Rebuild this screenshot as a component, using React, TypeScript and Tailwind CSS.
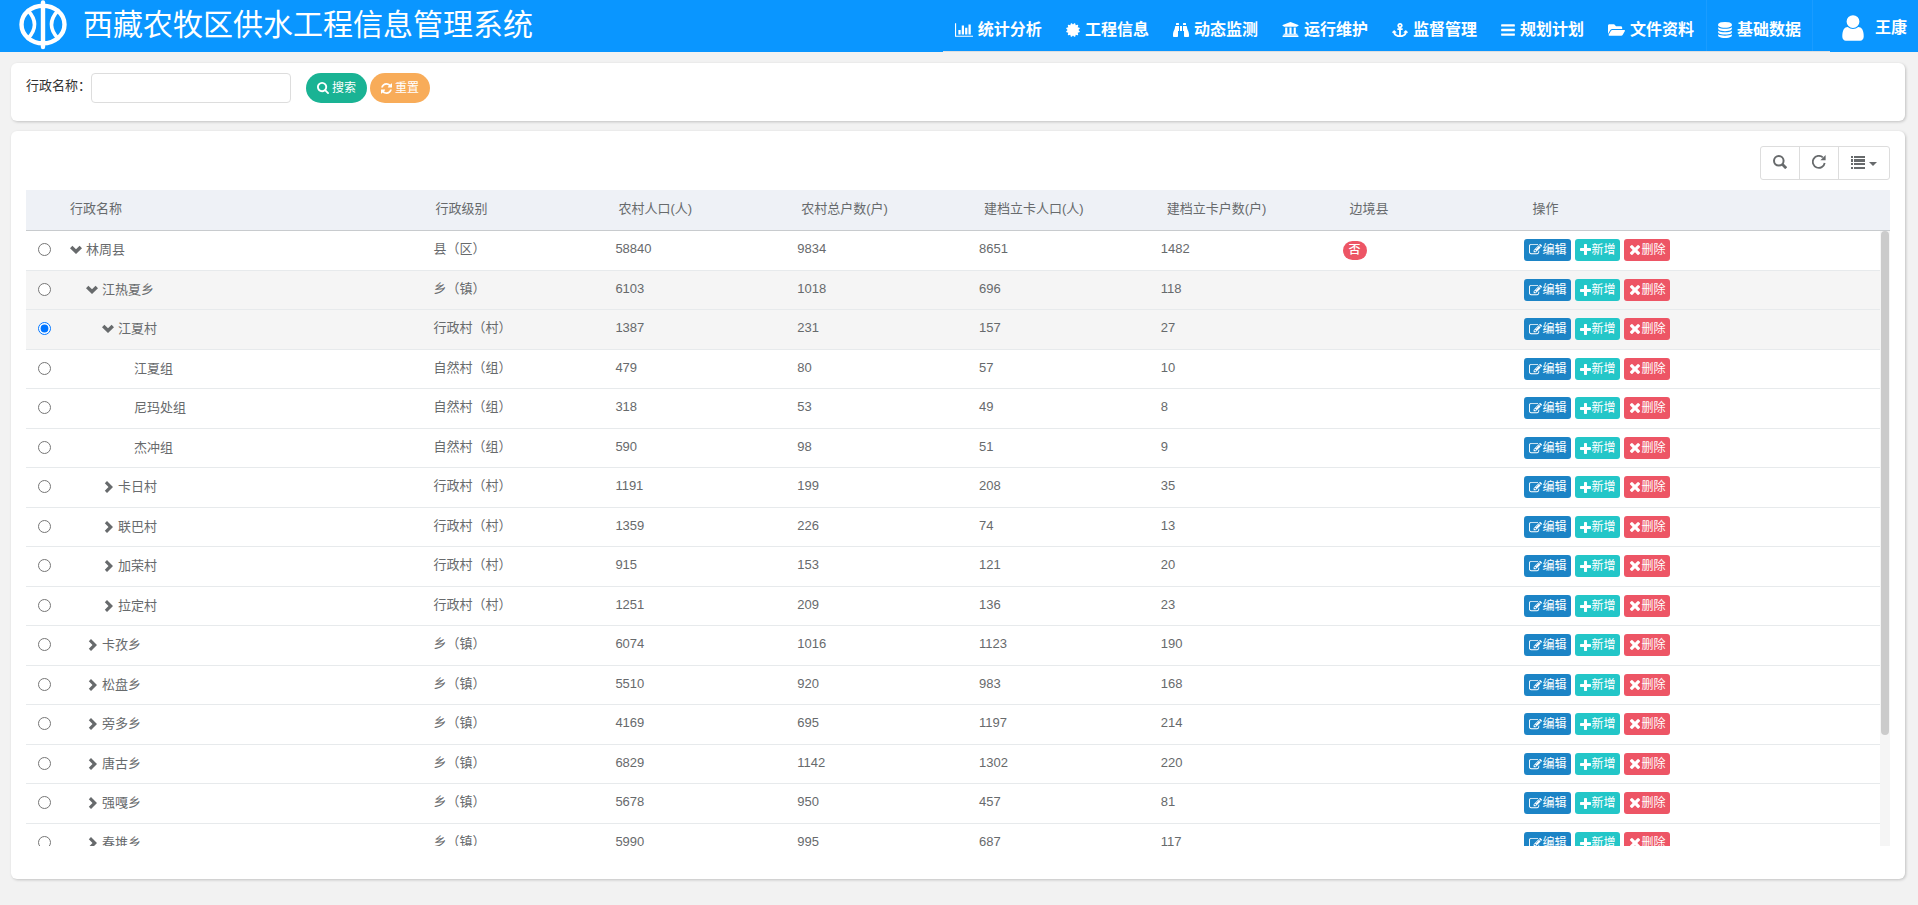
import { useState } from "react";
import type { ReactNode } from "react";
import { FaAnchor, FaBinoculars, FaFolderOpen, FaUniversity } from "react-icons/fa";
import clsx from "clsx";

interface IconProps {
  d: string;
  viewBox?: string;
  className?: string;
}

function Icon({ d, viewBox = "0 0 1792 1792", className }: IconProps) {
  return (
    <svg viewBox={viewBox} className={className} fill="currentColor" aria-hidden="true">
      <path d={d} />
    </svg>
  );
}

const ICONS = {
  barChart:
    "M640 896v512h-256v-512h256zm384-512v1024h-256v-1024h256zm1024 1152v128h-2048v-1536h128v1408h1920zm-640-896v768h-256v-768h256zm384-384v1152h-256v-1152h256z",
  certificate:
    "M1504 896l138 135q30 28 20 70-12 41-52 51l-188 48 53 186q12 41-19 70-29 31-70 19l-186-53-48 188q-10 40-51 52-12 2-19 2-31 0-51-22l-135-138-135 138q-28 30-70 20-41-11-51-52l-48-188-186 53q-41 12-70-19-31-29-19-70l53-186-188-48q-40-10-52-51-10-42 20-70l138-135-138-135q-30-28-20-70 12-41 52-51l188-48-53-186q-12-41 19-70 29-31 70-19l186 53 48-188q10-41 51-51 41-12 70 19l135 139 135-139q29-30 70-19 41 10 51 51l48 188 186-53q41-12 70 19 31 29 19 70l-53 186 188 48q40 10 52 51 10 42-20 70z",
  bars: "M1664 1344v128q0 26-19 45t-45 19h-1408q-26 0-45-19t-19-45v-128q0-26 19-45t45-19h1408q26 0 45 19t19 45zm0-512v128q0 26-19 45t-45 19h-1408q-26 0-45-19t-19-45v-128q0-26 19-45t45-19h1408q26 0 45 19t19 45zm0-512v128q0 26-19 45t-45 19h-1408q-26 0-45-19t-19-45v-128q0-26 19-45t45-19h1408q26 0 45 19t19 45z",
  database:
    "M896 768q237 0 443-43t325-127v170q0 69-103 128t-280 93.5-385 34.5-385-34.5-280-93.5-103-128v-170q119 84 325 127t443 43zm0 768q237 0 443-43t325-127v170q0 69-103 128t-280 93.5-385 34.5-385-34.5-280-93.5-103-128v-170q119 84 325 127t443 43zm0-384q237 0 443-43t325-127v170q0 69-103 128t-280 93.5-385 34.5-385-34.5-280-93.5-103-128v-170q119 84 325 127t443 43zm0-1152q208 0 385 34.5t280 93.5 103 128v128q0 69-103 128t-280 93.5-385 34.5-385-34.5-280-93.5-103-128v-128q0-69 103-128t280-93.5 385-34.5z",
  user: "M1536 1399q0 109-62.5 187t-150.5 78h-854q-88 0-150.5-78t-62.5-187q0-85 8.5-160.5t31.5-152 58.5-131 94-89 134.5-34.5q131 128 313 128t313-128q76 0 134.5 34.5t94 89 58.5 131 31.5 152 8.5 160.5zm-256-887q0 159-112.5 271.5t-271.5 112.5-271.5-112.5-112.5-271.5 112.5-271.5 271.5-112.5 271.5 112.5 112.5 271.5z",
  search:
    "M1216 832q0-185-131.5-316.5t-316.5-131.5-316.5 131.5-131.5 316.5 131.5 316.5 316.5 131.5 316.5-131.5 131.5-316.5zm512 832q0 52-38 90t-90 38q-54 0-90-38l-343-342q-179 124-399 124-143 0-273.5-55.5t-225-150-150-225-55.5-273.5 55.5-273.5 150-225 225-150 273.5-55.5 273.5 55.5 225 150 150 225 55.5 273.5q0 220-124 399l343 343q37 37 37 90z",
  refresh:
    "M1639 1056q0 5-1 7-64 268-268 434.5t-478 166.5q-146 0-282.5-55t-243.5-157l-129 129q-19 19-45 19t-45-19-19-45v-448q0-26 19-45t45-19h448q26 0 45 19t19 45-19 45l-137 137q71 66 161 102t187 36q134 0 250-65t186-179q11-17 53-117 8-23 30-23h192q13 0 22.5 9.5t9.5 22.5zm25-800v448q0 26-19 45t-45 19h-448q-26 0-45-19t-19-45 19-45l138-138q-148-137-349-137-134 0-250 65t-186 179q-11 17-53 117-8 23-30 23h-199q-13 0-22.5-9.5t-9.5-22.5v-7q65-268 270-434.5t480-166.5q146 0 284 55.5t245 156.5l130-129q19-19 45-19t45 19 19 45z",
  edit: "M888 1184l116-116-152-152-116 116v56h96v96h56zm440-720q-16-16-33 1l-350 350q-17 17-1 33t33-1l350-350q17-17 1-33zm80 594v190q0 119-84.5 203.5t-203.5 84.5h-832q-119 0-203.5-84.5t-84.5-203.5v-832q0-119 84.5-203.5t203.5-84.5h832q63 0 117 25 15 7 18 23 3 17-9 29l-49 49q-14 14-32 8-23-6-45-6h-832q-66 0-113 47t-47 113v832q0 66 47 113t113 47h832q66 0 113-47t47-113v-126q0-13 9-22l64-64q15-15 35-7t20 29zm-96-738l288 288-672 672h-288v-288zm444 132l-92 92-288-288 92-92q28-28 68-28t68 28l152 152q28 28 28 68t-28 68z",
  plus: "M1600 736v192q0 40-28 68t-68 28h-416v416q0 40-28 68t-68 28h-192q-40 0-68-28t-28-68v-416h-416q-40 0-68-28t-28-68v-192q0-40 28-68t68-28h416v-416q0-40 28-68t68-28h192q40 0 68 28t28 68v416h416q40 0 68 28t28 68z",
  remove:
    "M1490 1322q0 40-28 68l-136 136q-28 28-68 28t-68-28l-294-294-294 294q-28 28-68 28t-68-28l-136-136q-28-28-28-68t28-68l294-294-294-294q-28-28-28-68t28-68l136-136q28-28 68-28t68 28l294 294 294-294q28-28 68-28t68 28l136 136q28 28 28 68t-28 68l-294 294 294 294q28 28 28 68z",
  chevronDown: "M0 4.3L2.400 1.800 6 5.200 9.600 1.800 12 4.300 6 10z",
  chevronRight: "M5 0L11 6 5 12 2.800 9.800 6.500 6 2.800 2.200z",
};

interface NavItem {
  label: string;
  icon: ReactNode;
  active?: boolean;
}

const NAV: NavItem[] = [
  { label: "统计分析", icon: <Icon d={ICONS.barChart} viewBox="0 0 2048 1792" className="h-4 w-[18px]" /> },
  { label: "工程信息", icon: <Icon d={ICONS.certificate} viewBox="128 0 1536 1792" className="h-4 w-[14px]" /> },
  { label: "动态监测", icon: <FaBinoculars className="h-4 w-4" /> },
  { label: "运行维护", icon: <FaUniversity className="h-[17px] w-[17px]" /> },
  { label: "监督管理", icon: <FaAnchor className="h-4 w-4" /> },
  { label: "规划计划", icon: <Icon d={ICONS.bars} viewBox="128 0 1536 1792" className="h-4 w-[14px]" /> },
  { label: "文件资料", icon: <FaFolderOpen className="h-4 w-[17px]" /> },
  { label: "基础数据", icon: <Icon d={ICONS.database} viewBox="128 0 1536 1792" className="h-4 w-[14px]" />, active: true },
];

const COLUMNS = [
  "行政名称",
  "行政级别",
  "农村人口(人)",
  "农村总户数(户)",
  "建档立卡人口(人)",
  "建档立卡户数(户)",
  "边境县",
  "操作",
];

interface Region {
  name: string;
  level: number;
  type: string;
  values: number[];
  open?: boolean;
  leaf?: boolean;
  border?: string;
}

const COUNTY = "县（区）";
const TOWN = "乡（镇）";
const VILLAGE = "行政村（村）";
const GROUP = "自然村（组）";

const REGIONS: Region[] = [
  { name: "林周县", level: 0, type: COUNTY, values: [58840, 9834, 8651, 1482], open: true, border: "否" },
  { name: "江热夏乡", level: 1, type: TOWN, values: [6103, 1018, 696, 118], open: true },
  { name: "江夏村", level: 2, type: VILLAGE, values: [1387, 231, 157, 27], open: true },
  { name: "江夏组", level: 3, type: GROUP, values: [479, 80, 57, 10], leaf: true },
  { name: "尼玛处组", level: 3, type: GROUP, values: [318, 53, 49, 8], leaf: true },
  { name: "杰冲组", level: 3, type: GROUP, values: [590, 98, 51, 9], leaf: true },
  { name: "卡日村", level: 2, type: VILLAGE, values: [1191, 199, 208, 35] },
  { name: "联巴村", level: 2, type: VILLAGE, values: [1359, 226, 74, 13] },
  { name: "加荣村", level: 2, type: VILLAGE, values: [915, 153, 121, 20] },
  { name: "拉定村", level: 2, type: VILLAGE, values: [1251, 209, 136, 23] },
  { name: "卡孜乡", level: 1, type: TOWN, values: [6074, 1016, 1123, 190] },
  { name: "松盘乡", level: 1, type: TOWN, values: [5510, 920, 983, 168] },
  { name: "旁多乡", level: 1, type: TOWN, values: [4169, 695, 1197, 214] },
  { name: "唐古乡", level: 1, type: TOWN, values: [6829, 1142, 1302, 220] },
  { name: "强嘎乡", level: 1, type: TOWN, values: [5678, 950, 457, 81] },
  { name: "春堆乡", level: 1, type: TOWN, values: [5990, 995, 687, 117] },
];

const INDENT = ["pl-2", "pl-6", "pl-10", "pl-14"];

function Logo() {
  return (
    <svg viewBox="0 0 48 50" className="h-[50px] w-12 shrink-0" fill="none" stroke="#fff" strokeLinecap="round">
      <ellipse cx="24" cy="24.500" rx="21.500" ry="18.800" strokeWidth="4.400" />
      <path d="M24 2.500V47" strokeWidth="4.400" />
      <path d="M9 10.500Q22 24.500 9 38.500" strokeWidth="3.600" />
      <path d="M39 10.500Q26 24.500 39 38.500" strokeWidth="3.600" />
    </svg>
  );
}

function Header() {
  return (
    <header className="flex h-[52px] items-stretch bg-[#0a96ff] text-white">
      <div className="flex flex-1 items-start pl-[19px]">
        <Logo />
        <h1 className="pl-4 text-[30px] leading-[50px] whitespace-nowrap">西藏农牧区供水工程信息管理系统</h1>
      </div>
      <nav className="flex items-stretch border-b border-[#dddfe1] pr-[17px]">
        {NAV.map((item) => (
          <a
            key={item.label}
            href="#"
            className={clsx(
              "flex items-center gap-[5px] border-x px-[11px] pt-2 text-base font-bold whitespace-nowrap",
              item.active ? "border-[#1a9cff]" : "border-transparent"
            )}
          >
            {item.icon}
            <span>{item.label}</span>
          </a>
        ))}
      </nav>
      <a href="#" className="flex items-center gap-[11px] pt-1 pr-[11px] pl-3 text-base font-bold">
        <Icon d={ICONS.user} viewBox="256 0 1280 1792" className="h-[30px] w-[22px]" />
        <span>王康</span>
      </a>
    </header>
  );
}

function SearchPanel() {
  const [keyword, setKeyword] = useState("");

  return (
    <form
      className="flex items-start rounded-md bg-white px-[15px] pt-[10px] pb-[18px] shadow-[1px_1px_3px_rgba(0,0,0,0.2)]"
      onSubmit={(e) => e.preventDefault()}
    >
      <label htmlFor="region-name" className="w-[65px] text-[13px] leading-[26px] whitespace-nowrap text-[#333]">
        行政名称：
      </label>
      <input
        id="region-name"
        type="text"
        value={keyword}
        onChange={(e) => setKeyword(e.target.value)}
        className="h-[30px] w-[200px] rounded border border-[#ddd] px-2 text-[13px] outline-none"
      />
      <button
        type="submit"
        className="ml-[15px] flex h-[30px] items-center gap-[3px] rounded-full bg-[#1ab394] px-[11px] text-xs text-white"
      >
        <Icon d={ICONS.search} viewBox="64 128 1664 1664" className="h-3 w-3" />
        搜索
      </button>
      <button
        type="button"
        onClick={() => setKeyword("")}
        className="ml-[3px] flex h-[30px] items-center gap-[3px] rounded-full bg-[#f8ac59] px-[11px] text-xs text-white"
      >
        <Icon d={ICONS.refresh} viewBox="128 128 1536 1536" className="h-[11px] w-[11px]" />
        重置
      </button>
    </form>
  );
}

function Toolbar() {
  return (
    <div className="flex justify-end">
      <div className="flex h-[34px] divide-x divide-[#ddd] rounded-[3px] border border-[#ddd] text-[#676a6c]">
        <button type="button" aria-label="搜索" className="flex w-[39px] items-start justify-center pt-2">
          <svg viewBox="0 0 14 14" className="h-3.5 w-3.5" fill="none" stroke="currentColor">
            <circle cx="5.800" cy="5.800" r="4.800" strokeWidth="2" />
            <path d="M9.300 9.300L13.200 13.200" strokeWidth="2.800" />
          </svg>
        </button>
        <button type="button" aria-label="刷新" className="flex w-[39px] items-start justify-center pt-2">
          <svg viewBox="0 0 14 14" className="h-3.5 w-3.5" fill="none" stroke="currentColor">
            <path d="M12.700 8A6 6 0 1 1 10.800 2.400" strokeWidth="1.800" />
            <path d="M13.600 0V5.200H8.400z" fill="currentColor" stroke="none" />
          </svg>
        </button>
        <button type="button" aria-label="列" className="flex w-[50px] items-start justify-center gap-1 pt-2">
          <svg viewBox="0 0 14 14" className="h-3.5 w-3.5" fill="currentColor">
            <path d="M0 1h2v2H0zM3 1h11v2H3zM0 4h2v3H0zM3 4h11v3H3zM0 8h2v2H0zM3 8h11v2H3zM0 12h2v2H0zM3 12h11v2H3z" />
          </svg>
          <svg viewBox="0 0 8 4" className="mt-[7px] h-1 w-2" fill="currentColor">
            <path d="M0 0h8L4 4z" />
          </svg>
        </button>
      </div>
    </div>
  );
}

function ColGroup() {
  return (
    <colgroup>
      <col className="w-9" />
      <col className="w-[20%]" />
      <col className="w-[10%]" />
      <col className="w-[10%]" />
      <col className="w-[10%]" />
      <col className="w-[10%]" />
      <col className="w-[10%]" />
      <col className="w-[10%]" />
      <col className="w-[20%]" />
    </colgroup>
  );
}

function RowActions() {
  const base = "flex h-[22px] items-center rounded-[3px] px-[5px] text-xs text-white";
  return (
    <div className="flex gap-1">
      <button type="button" className={clsx(base, "bg-[#1c84c6]")}>
        <Icon d={ICONS.edit} className="h-[13px] w-[13px]" />
        编辑
      </button>
      <button type="button" className={clsx(base, "bg-[#23c6c8]")}>
        <Icon d={ICONS.plus} viewBox="192 128 1408 1408" className="h-[11px] w-[11px]" />
        新增
      </button>
      <button type="button" className={clsx(base, "bg-[#ed5565]")}>
        <Icon d={ICONS.remove} viewBox="192 256 1408 1408" className="h-3 w-3" />
        删除
      </button>
    </div>
  );
}

interface RegionRowProps {
  region: Region;
  checked: boolean;
  highlighted: boolean;
  onSelect: () => void;
}

function RegionRow({ region, checked, highlighted, onSelect }: RegionRowProps) {
  return (
    <tr
      className={clsx(
        "h-[39px] border-b border-[#e7eaec] align-top odd:h-10 hover:bg-[#f5f5f5]",
        (checked || highlighted) && "bg-[#f5f5f5]"
      )}
    >
      <td className="pt-3 pl-3">
        <input
          type="radio"
          name="region"
          aria-label={region.name}
          checked={checked}
          onChange={onSelect}
          className="block h-[13px] w-[13px]"
        />
      </td>
      <td className={clsx("pt-[9px]", INDENT[region.level])}>
        <div className="flex items-center gap-1">
          {!region.leaf && (
            <Icon
              d={region.open ? ICONS.chevronDown : ICONS.chevronRight}
              viewBox="0 0 12 12"
              className="h-3 w-3"
            />
          )}
          <span className={clsx(region.leaf && "pl-4")}>{region.name}</span>
        </div>
      </td>
      <td className="pt-2 pl-2">{region.type}</td>
      {region.values.map((value, i) => (
        <td key={i} className="pt-2 pl-2">
          {value}
        </td>
      ))}
      <td className="pt-[10px] pl-2">
        {region.border && (
          <span className="block w-6 rounded-full bg-[#ed5565] text-center text-xs leading-[19px] font-medium text-white">
            {region.border}
          </span>
        )}
      </td>
      <td className="pt-2 pl-2">
        <RowActions />
      </td>
    </tr>
  );
}

function RegionTable() {
  const [selected, setSelected] = useState("江夏村");

  return (
    <section className="rounded-md bg-white px-[15px] pt-[15px] pb-[33px] text-[#676a6c] shadow-[1px_1px_3px_rgba(0,0,0,0.2)]">
      <Toolbar />
      <table className="mt-[10px] w-full table-fixed border-collapse text-[13px]">
        <ColGroup />
        <thead>
          <tr className="h-10 border-b border-[#c8cbce] bg-[#eef1f6]">
            <th aria-label="选择" />
            {COLUMNS.map((title) => (
              <th key={title} scope="col" className="pb-0.5 pl-2 text-left font-normal">
                {title}
              </th>
            ))}
          </tr>
        </thead>
      </table>

      <div className="flex h-[615px]">
        <div className="flex-1 overflow-y-auto [scrollbar-width:none]">
          <table className="w-full table-fixed border-collapse text-[13px] leading-5">
            <ColGroup />
            <tbody>
              {REGIONS.map((region) => (
                <RegionRow
                  key={region.name}
                  region={region}
                  checked={selected === region.name}
                  highlighted={region.name === "江热夏乡"}
                  onSelect={() => setSelected(region.name)}
                />
              ))}
            </tbody>
          </table>
        </div>
        {/* Scroll track */}
        <div className="w-[10px] bg-[#f5f5f5] px-px">
          <div className="h-[82%] rounded-full bg-[#cbcbcb]" />
        </div>
      </div>
    </section>
  );
}

export default function App() {
  return (
    <div className="min-h-screen bg-[#f2f2f2] font-['Liberation_Sans','Noto_Sans_CJK_SC',sans-serif]">
      <Header />
      <main className="flex flex-col gap-[10px] pt-[11px] pr-[13px] pb-[26px] pl-[11px]">
        <SearchPanel />
        <RegionTable />
      </main>
    </div>
  );
}
